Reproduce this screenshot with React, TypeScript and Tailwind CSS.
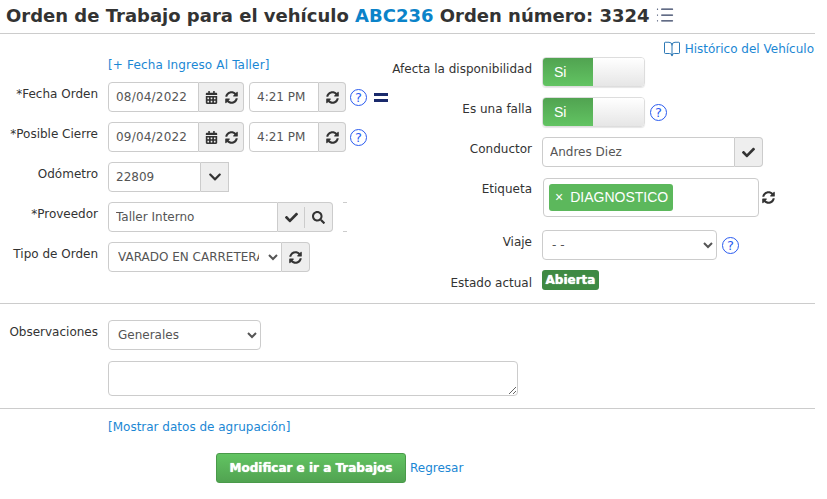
import React from "react";
import { FaCalendarAlt, FaCheck, FaChevronDown, FaSearch, FaSyncAlt } from "react-icons/fa";
import { BookOpen, List } from "lucide-react";

const inputCls = "h-[30px] border border-[#ccc] bg-white px-[7px] text-[12px] text-[#555] outline-none";
const addonCls = "flex h-[30px] items-center justify-center border border-[#ccc] bg-[#eee] text-[#333]";

function Help() {
  return (
    <span className="flex h-[17px] w-[17px] shrink-0 items-center justify-center rounded-full border border-[#2a5bf0] text-[13px] leading-none text-[#2a5bf0]">
      ?
    </span>
  );
}

function Row({ label, labelW, labelCls, className, children }: { label: string; labelW: string; labelCls?: string; className?: string; children: React.ReactNode }) {
  return (
    <div className={`flex items-start ${className ?? ""}`}>
      <label className={`${labelW} ${labelCls ?? "pt-[3px]"} shrink-0 text-right text-[12px] leading-[18px] text-[#333]`}>{label}</label>
      <div className="ml-[10px] flex items-center">{children}</div>
    </div>
  );
}

function DateRow({ date }: { date: string }) {
  return (
    <>
      <input readOnly value={date} className={`${inputCls} w-[91px] rounded-l-[4px] tracking-[0.2px]`} />
      <span className={`${addonCls} w-[45px] gap-[7px] rounded-r-[4px] border-l-0`}>
        <FaCalendarAlt size={13} />
        <FaSyncAlt size={13} />
      </span>
      <input readOnly value="4:21 PM" className={`${inputCls} ml-[5px] w-[70px] rounded-l-[4px]`} />
      <span className={`${addonCls} w-[27px] rounded-r-[4px] border-l-0`}>
        <FaSyncAlt size={13} />
      </span>
      <span className="ml-[4px]">
        <Help />
      </span>
    </>
  );
}

function Toggle() {
  return (
    <div className="flex h-[30px] w-[103px] overflow-hidden rounded-[4px] border border-[#ddd] shadow-[0_1px_1px_rgba(0,0,0,0.1)]">
      <span className="flex w-[50px] items-center bg-gradient-to-b from-[#51a351] to-[#62c462] pl-[11px] font-['Liberation_Sans',sans-serif] text-[14px] text-white">Si</span>
      <span className="flex-1 bg-gradient-to-b from-[#fff] to-[#e6e6e6]" />
    </div>
  );
}

export default function App() {
  return (
    <div className="h-[499px] w-[827px] overflow-hidden bg-white font-['DejaVu_Sans',sans-serif]">
      <div className="w-[815px]">
        <div className="flex h-[34px] items-center border-b border-[#ccc] pb-[3px] pl-[6px]">
          <h1 className="text-[18px] font-bold text-[#333]">
            Orden de Trabajo para el vehículo <a className="text-[#0b83c9]">ABC236</a> Orden número: 3324
          </h1>
          <List size={20} strokeWidth={1.5} className="ml-[5px] text-[#2f3d5f]" />
        </div>

        <div className="flex h-[270px] border-b border-[#ccc]">
          {/* left column */}
          <div className="w-[390px] shrink-0">
            <div className="h-[48px] pl-[108px] pt-[22px] text-[12px] leading-[18px] tracking-[0.15px] text-[#1b87d4]">[+ Fecha Ingreso Al Taller]</div>
            <Row label="*Fecha Orden" labelW="w-[98px]" className="relative h-[40px]">
              <DateRow date="08/04/2022" />
              <span className="absolute left-[374px] top-[11px] flex w-[14px] flex-col gap-[3px]">
                <span className="h-[3px] bg-[#1a2a6c]" />
                <span className="h-[3px] bg-[#1a2a6c]" />
              </span>
            </Row>
            <Row label="*Posible Cierre" labelW="w-[98px]" className="h-[40px]">
              <DateRow date="09/04/2022" />
            </Row>
            <Row label="Odómetro" labelW="w-[98px]" className="h-[40px]">
              <input readOnly value="22809" className={`${inputCls} w-[93px] rounded-l-[4px]`} />
              <span className={`${addonCls} w-[28px] border-l-0`}>
                <FaChevronDown size={14} />
              </span>
            </Row>
            <Row label="*Proveedor" labelW="w-[98px]" className="relative h-[40px]">
              <input readOnly value="Taller Interno" className={`${inputCls} w-[170px] rounded-l-[4px]`} />
              <span className={`${addonCls} w-[55px] rounded-r-[4px] border-l-0`}>
                <span className="flex w-[26px] justify-center border-r border-[#ccc] py-[4px]">
                  <FaCheck size={13} />
                </span>
                <span className="flex w-[27px] justify-center">
                  <FaSearch size={13} />
                </span>
              </span>
              <span className="absolute left-[343px] top-0 h-[30px] w-[4px] border-y border-[#ccc]" />
            </Row>
            <Row label="Tipo de Orden" labelW="w-[98px]" className="h-[40px]">
              <select className="h-[30px] w-[174px] rounded-l-[4px] border border-[#ccc] bg-white pl-[5px] pr-[6px] text-[12px] text-[#555] outline-none">
                <option>VARADO EN CARRETERA</option>
              </select>
              <span className={`${addonCls} w-[28px] rounded-r-[4px] border-l-0`}>
                <FaSyncAlt size={13} />
              </span>
            </Row>
          </div>

          {/* right column */}
          <div className="flex-1">
            <div className="flex h-[23px] items-center justify-end pr-px pt-[7px] text-[12px] text-[#1b87d4]">
              <BookOpen size={18} strokeWidth={1.25} className="mr-[4px] text-[#1e6fb0]" />
              Histórico del Vehículo
            </div>
            <Row label="Afecta la disponibilidad" labelW="w-[142px]" className="h-[40px]">
              <Toggle />
            </Row>
            <Row label="Es una falla" labelW="w-[142px]" className="h-[40px]">
              <Toggle />
              <span className="ml-[5px]">
                <Help />
              </span>
            </Row>
            <Row label="Conductor" labelW="w-[142px]" className="h-[41px]">
              <input readOnly value="Andres Diez" className={`${inputCls} w-[193px] rounded-l-[4px]`} />
              <span className={`${addonCls} w-[28px] rounded-r-[4px] border-l-0`}>
                <FaCheck size={13} />
              </span>
            </Row>
            <Row label="Etiqueta" labelW="w-[142px]" labelCls="pt-[2px]" className="h-[52px]">
              <div className="ml-px h-[39px] w-[216px] rounded-[4px] border border-[#ccc] px-[5px] pt-[5px]">
                <span className="inline-flex h-[27px] w-[124px] items-center gap-[7px] rounded-[3px] bg-[#5cb85c] pl-[6px] font-['Liberation_Sans',sans-serif] text-[14px] text-white">
                  <span>×</span>DIAGNOSTICO
                </span>
              </div>
              <FaSyncAlt size={13} className="ml-[3px] text-[#333]" />
            </Row>
            <Row label="Viaje" labelW="w-[142px]" className="h-[40px]">
              <select className="h-[30px] w-[175px] rounded-[4px] border border-[#ccc] bg-white pl-[5px] text-[12px] text-[#555] outline-none">
                <option>- -</option>
              </select>
              <span className="ml-[5px]">
                <Help />
              </span>
            </Row>
            <Row label="Estado actual" labelW="w-[142px]" labelCls="pt-[4px]">
              <span className="flex h-[20px] w-[57px] items-center justify-center rounded-[3px] bg-[#3f8a43] text-[12px] font-bold text-white [text-shadow:0_0_1px_#fff]">
                Abierta
              </span>
            </Row>
          </div>
        </div>

        <div className="h-[105px] border-b border-[#ccc] pt-[16px]">
          <Row label="Observaciones" labelW="w-[98px]" className="h-[41px]">
            <select className="h-[30px] w-[153px] rounded-[4px] border border-[#ccc] bg-white pl-[5px] text-[12px] text-[#555] outline-none">
              <option>Generales</option>
            </select>
          </Row>
          <textarea className="ml-[108px] block h-[35px] w-[410px] rounded-[4px] border border-[#ccc] outline-none" />
        </div>

        <div className="pl-[108px] pt-[9px] text-[12px] leading-[18px] text-[#1b87d4]">[Mostrar datos de agrupación]</div>
        <div className="ml-[216px] mt-[17px] flex items-center">
          <button className="h-[30px] w-[190px] rounded-[3px] border border-[#4a9a4a] bg-gradient-to-b from-[#62c462] to-[#51a351] text-[12px] font-bold text-white [text-shadow:0_0_1px_#fff]">
            Modificar e ir a Trabajos
          </button>
          <a className="ml-[4px] text-[12px] text-[#1b87d4]">Regresar</a>
        </div>
      </div>
    </div>
  );
}
